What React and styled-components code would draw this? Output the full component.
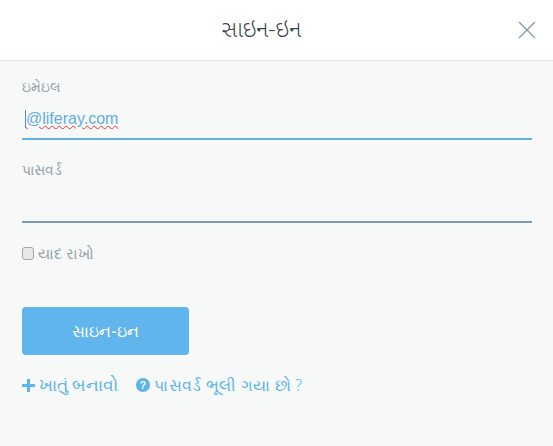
import React from 'react';
import styled, { createGlobalStyle } from 'styled-components';

const Global = createGlobalStyle`
  html, body { margin: 0; padding: 0; background: #f7f8f8; }
  body { font-family: "Noto Sans", "Liberation Sans", sans-serif; }
  * { box-sizing: border-box; }
`;
const Modal = styled.div`width: 553px; height: 446px; display: flex; flex-direction: column; background: #f7f8f8; overflow: hidden;`;
const Header = styled.header`height: 61px; flex: none; background: #fff; border-bottom: 1px solid #e3e6e8; display: flex; align-items: center; justify-content: center; padding-right: 30px; position: relative;`;
const Title = styled.h1`margin: 3px 0 0; font-family: "Noto Sans Gujarati", "Noto Sans", sans-serif; font-size: 22.5px; line-height: 26px; font-weight: 300; color: #37444a;`;
const Close = styled.button`position: absolute; right: 17px; top: 21px; width: 18px; height: 18px; padding: 0; border: 0; background: none; display: flex; color: #8a9ba3;`;
const Form = styled.form`flex: 1; display: flex; flex-direction: column; padding: 14px 21px 0 22px;`;
const Field = styled.div`display: flex; flex-direction: column; height: 83px;`;
const Label = styled.label`font-size: 14px; line-height: 24px; font-weight: 300; color: #93a2ab;`;
const InputBox = styled.div`height: 41px; flex: none; border-bottom: 2px solid ${p => p.$dark ? '#7f9aae' : '#62b0de'}; display: flex; align-items: center; padding: 0 3px 0;`;
const Value = styled.span`font-family: "Liberation Sans", sans-serif; font-size: 16px; color: #62ade0; border-left: 1px solid #4d8fc0; line-height: 18px; text-decoration: underline wavy #e33 1px;`;
const Remember = styled.label`display: flex; align-items: center; gap: 4px; font-size: 15px; font-weight: 300; color: #93a2ab; height: 24px;`;
const Check = styled.span`width: 12px; height: 13px; border: 1px solid #a3a7aa; border-radius: 3px; background: #e9e9e9;`;
const Submit = styled.button`margin-top: 42px; width: 167px; height: 48px; flex: none; border: 0; border-radius: 4px; background: #60b5ec; color: #fff; font: 500 16px "Noto Sans", sans-serif;`;
const Links = styled.div`display: flex; gap: 18px; margin-top: 18px;`;
const LinkItem = styled.a`display: flex; align-items: center; gap: 4px; font-size: ${p => p.$size}px; letter-spacing: ${p => p.$spacing || 0}px; line-height: 24px; font-weight: 300; color: #5cb4e8;`;

export default function App() {
  return (
    <Modal>
      <Global />
      <Header>
        <Title>સાઇન-ઇન</Title>
        <Close aria-label="close"><svg viewBox="0 0 18 18" width="18" height="18"><path d="M1 1 17 17M17 1 1 17" stroke="currentColor" strokeWidth="1.4" fill="none"/></svg></Close>
      </Header>
      <Form>
        <Field>
          <Label>ઇમેઇલ</Label>
          <InputBox><Value>@liferay.com</Value></InputBox>
        </Field>
        <Field>
          <Label>પાસવર્ડ</Label>
          <InputBox $dark />
        </Field>
        <Remember><Check />યાદ રાખો</Remember>
        <Submit type="button">સાઇન-ઇન</Submit>
        <Links>
          <LinkItem $size={17}><svg width="13" height="13" viewBox="0 0 13 13"><path d="M5 0h3v5h5v3H8v5H5V8H0V5h5z" fill="currentColor"/></svg>ખાતું બનાવો</LinkItem>
          <LinkItem $size={16} $spacing={0.25}><svg width="14" height="14" viewBox="0 0 14 14"><circle cx="7" cy="7" r="7" fill="currentColor"/><text x="7" y="11" textAnchor="middle" fontSize="11" fontWeight="700" fill="#f7f8f8" fontFamily="Liberation Sans">?</text></svg>પાસવર્ડ ભૂલી ગયા છો ?</LinkItem>
        </Links>
      </Form>
    </Modal>
  );
}
